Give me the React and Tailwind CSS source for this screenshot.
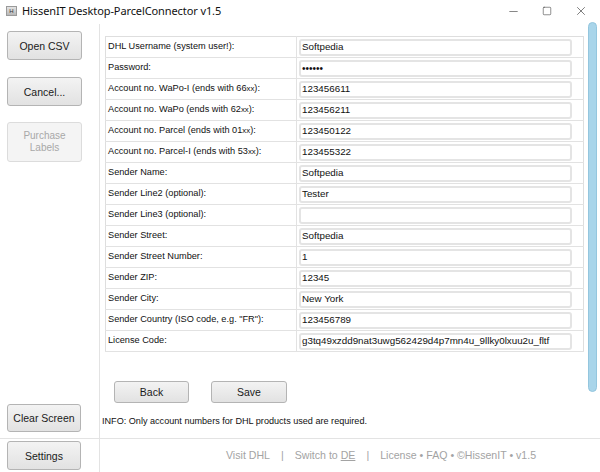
import { Minus, Square, X } from "lucide-react";

// Felder des Konfigurationsformulars
const fields = [
  { label: "DHL Username (system user!):", value: "Softpedia" },
  { label: "Password:", value: "••••••", password: true },
  { label: "Account no. WaPo-I (ends with 66", suffix: "xx", value: "123456611" },
  { label: "Account no. WaPo (ends with 62", suffix: "xx", value: "123456211" },
  { label: "Account no. Parcel (ends with 01", suffix: "xx", value: "123450122" },
  { label: "Account no. Parcel-I (ends with 53", suffix: "xx", value: "123455322" },
  { label: "Sender Name:", value: "Softpedia" },
  { label: "Sender Line2 (optional):", value: "Tester" },
  { label: "Sender Line3 (optional):", value: "" },
  { label: "Sender Street:", value: "Softpedia" },
  { label: "Sender Street Number:", value: "1" },
  { label: "Sender ZIP:", value: "12345" },
  { label: "Sender City:", value: "New York" },
  { label: "Sender Country (ISO code, e.g. \"FR\"):", value: "123456789" },
  { label: "License Code:", value: "g3tq49xzdd9nat3uwg562429d4p7mn4u_9llky0lxuu2u_fltf" },
];

const WinButton = ({ children, className = "", disabled }) => (
  <button
    className={`flex items-center justify-center rounded-[3px] border text-center leading-[12px] ${
      disabled
        ? "border-[#dcdcdc] bg-[#f4f4f4] text-[#a8a8a8]"
        : "border-[#b4b4b4] bg-gradient-to-b from-[#f3f3f3] to-[#e2e2e2] text-[#1a1a1a]"
    } ${className}`}
  >
    {children}
  </button>
);

export default function App() {
  return (
    <div className="w-[600px] h-[472px] bg-white overflow-hidden font-['Liberation_Sans',Arial,sans-serif] text-black">
      {/* Titelleiste */}
      <div className="h-[22px] flex items-center">
        <div className="ml-[6px] w-[11px] h-[10px] bg-gradient-to-b from-[#e4e4e4] to-[#b8b8b8] border border-[#9a9a9a] flex items-center justify-center text-[6px] leading-none text-[#333]">
          H
        </div>
        <span className="ml-[5px] text-[11px] text-[#111] font-['Noto_Sans',sans-serif] tracking-[-0.1px]">
          HissenIT Desktop-ParcelConnector v1.5
        </span>
        <div className="ml-auto flex items-center pr-[2px]">
          <div className="w-[34px] flex justify-center">
            <Minus size={13} strokeWidth={1} color="#222" />
          </div>
          <div className="w-[34px] flex justify-center">
            <Square size={10} strokeWidth={1.2} color="#222" />
          </div>
          <div className="w-[34px] flex justify-center">
            <X size={14} strokeWidth={1} color="#222" />
          </div>
        </div>
      </div>

      {/* Hauptbereich */}
      <div className="flex h-[416px]">
        <div className="w-[100px] border-r border-[#e3e3e3] flex flex-col pl-[7px] pt-[7px] pb-[6px] mt-[2px]">
          <WinButton className="w-[75px] h-[29px] text-[10.5px]">Open CSV</WinButton>
          <WinButton className="w-[75px] h-[29px] text-[10.5px] mt-[17px]">Cancel...</WinButton>
          <WinButton className="w-[75px] h-[40px] text-[10px] mt-[16px]" disabled>
            Purchase
            <br />
            Labels
          </WinButton>
          <WinButton className="w-[74px] h-[28px] text-[10.5px] mt-auto">Clear Screen</WinButton>
        </div>

        <div className="flex-1 flex flex-col pl-[5px] pt-[14px]">
          <table className="w-[479px] border-collapse border border-[#dedede] text-[9.2px] text-[#111]">
            <tbody>
              {fields.map((f) => (
                <tr key={f.label} className="h-[21px] border-b border-[#e2e2e2]">
                  <td className="w-[191px] pl-[2px] border-r border-[#e2e2e2] whitespace-nowrap">
                    {f.label}
                    {f.suffix && (
                      <>
                        <span className="text-[7.8px]">{f.suffix}</span>):
                      </>
                    )}
                  </td>
                  <td className="pl-[2px] pr-[11px]">
                    <div className="h-[17px] w-[273px] rounded-[3px] border-2 border-[#e4e4e4] bg-white flex items-center pl-[1px] text-[9.8px] whitespace-nowrap overflow-hidden">
                      {f.password ? <span className="text-[10px]">{f.value}</span> : f.value}
                    </div>
                  </td>
                </tr>
              ))}
            </tbody>
          </table>

          <div className="flex mt-[29px] ml-[9px] gap-[22px]">
            <WinButton className="w-[75px] h-[22px] text-[10.5px]">Back</WinButton>
            <WinButton className="w-[76px] h-[22px] text-[10.5px]">Save</WinButton>
          </div>

          <p className="mt-[12px] -ml-[3px] text-[9.1px] text-[#111]">
            INFO: Only account numbers for DHL products used are required.
          </p>
        </div>

        <div className="w-[12px] pt-0 pr-[3px]">
          <div className="w-[9px] h-[370px] rounded-full bg-[#a9d5ea] border border-[#94c6de]" />
        </div>
      </div>

      {/* Fußzeile */}
      <div className="flex h-[34px] border-t border-[#e3e3e3]">
        <div className="w-[100px] border-r border-[#e3e3e3] pl-[7px] pt-[2px]">
          <WinButton className="w-[74px] h-[29px] text-[10.5px]">Settings</WinButton>
        </div>
        <div className="flex-1 flex items-center pl-[126px] text-[10.6px] text-[#a3a3a3] whitespace-nowrap">
          <span>Visit DHL</span>
          <span className="mx-[11px]">|</span>
          <span>
            Switch to <span className="underline">DE</span>
          </span>
          <span className="mx-[11px]">|</span>
          <span>License • FAQ • ©HissenIT • v1.5</span>
        </div>
      </div>
    </div>
  );
}
